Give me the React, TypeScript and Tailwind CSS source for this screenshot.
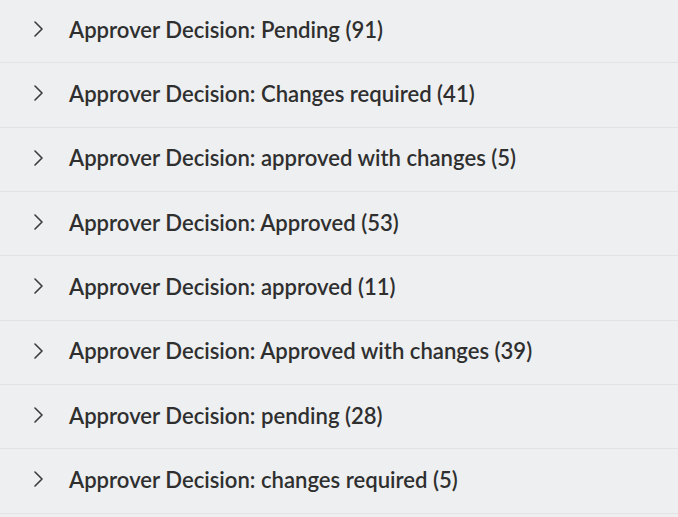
const items = [
  "Approver Decision: Pending (91)",
  "Approver Decision: Changes required (41)",
  "Approver Decision: approved with changes (5)",
  "Approver Decision: Approved (53)",
  "Approver Decision: approved (11)",
  "Approver Decision: Approved with changes (39)",
  "Approver Decision: pending (28)",
  "Approver Decision: changes required (5)",
];

const Chevron = () => (
  <svg width="14" height="16" viewBox="0 0 14 16" fill="none" className="shrink-0">
    <path d="M3 1 L10 8 L3 15" stroke="#3c3c3c" strokeWidth="1.6" strokeLinecap="round" strokeLinejoin="round" />
  </svg>
);

export default function App() {
  return (
    <div className="min-h-[517px] w-[678px] overflow-hidden bg-[#eeeff1] font-['Lato',sans-serif]">
      <div className="-mt-px">
        {items.map((label) => (
          <div
            key={label}
            className="flex h-[64.33px] items-center border-b border-[#e2e3e5] pb-[3px] pl-[32px] text-[#2f2f2f]"
          >
            <Chevron />
            <span className="ml-[23px] text-[22.1px] font-semibold">{label}</span>
          </div>
        ))}
      </div>
    </div>
  );
}
